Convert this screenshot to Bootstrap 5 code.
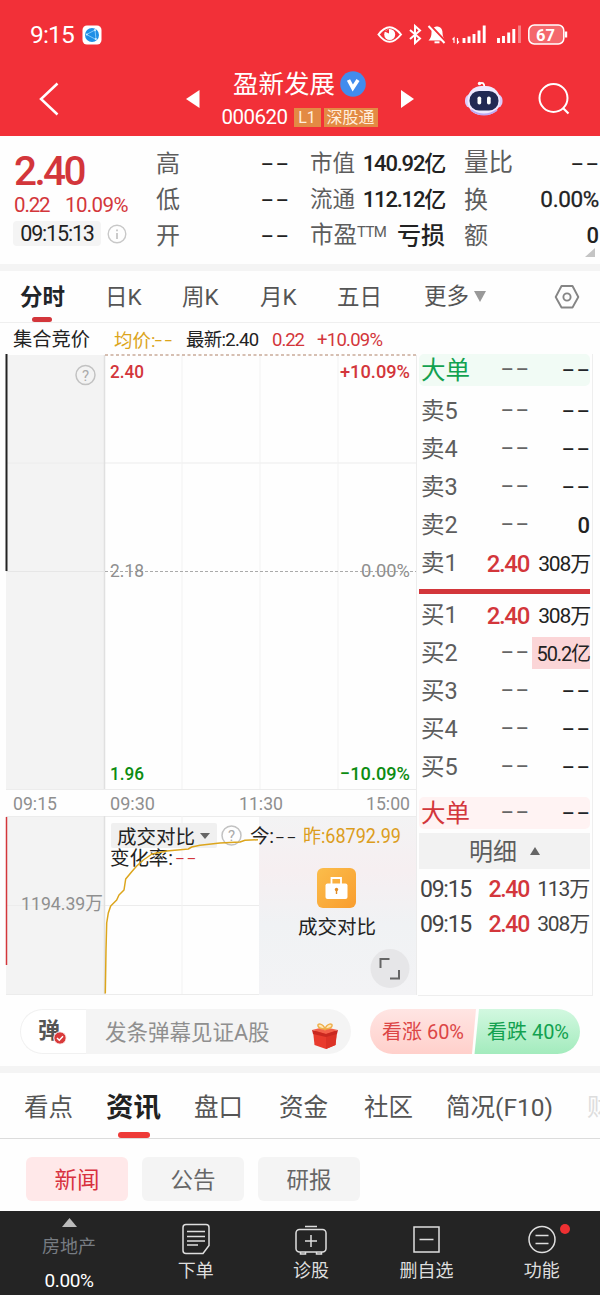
<!DOCTYPE html>
<html lang="zh-CN">
<head>
<meta charset="utf-8">
<meta name="viewport" content="width=device-width, initial-scale=1">
<title>盈新发展 000620</title>
<link href="https://cdn.jsdelivr.net/npm/bootstrap@5.3.0/dist/css/bootstrap.min.css" rel="stylesheet">
<style>
body{width:600px;height:1295px;overflow:hidden;background:#fefefe;color:#222;font-family:Roboto,"Noto Sans CJK SC",sans-serif;line-height:1}
svg{display:block;flex-shrink:0}
svg text{font-family:Roboto,"Noto Sans CJK SC",sans-serif}
.red{color:#d3363b}.grn{color:#12a150}.gry{color:#5d5d5d}
.n{letter-spacing:-.055em}
.n2{letter-spacing:-.03em}
.dash{display:inline-block;font-family:"Noto Sans CJK SC",sans-serif;font-size:24px;font-weight:400;letter-spacing:1px;line-height:24px;transform:translate(2px,-3px) scaleX(1.62);transform-origin:right center}
.topbar{background:#f23038;color:#fff;height:136px}
.status{height:68px;padding:2px 32px 0 30px}
.clock{font-size:24.5px;width:50px;letter-spacing:-.035em}
.titlebar{height:68px;padding:0 28px 6px 38px}
.stockname{font-size:25.5px;height:34px;padding-top:3px}
.tagx{background:#e38a44;color:#ffeedd;font-size:16px;height:19px;line-height:19px}
.quote{height:128px;padding:9px 0 0 14px}
.bigp{font-size:40.5px;font-weight:500;height:50px;line-height:52px;letter-spacing:-.065em}
.timebox{background:#f4f4f4;border-radius:4px;width:88px;height:25px;line-height:25px;font-size:21.5px;margin-left:-1px;text-align:center}
.qcol>div{height:36px;padding-top:1px;display:flex;align-items:center;justify-content:space-between}
.qcol .gry{font-size:24px}.qcol .val{font-size:22px;font-weight:500}
.band{height:7px;background:#f4f4f4}
.ktabs{height:52px;border-bottom:1px solid #efefef;font-size:22.5px;color:#555}
.ktabs>div{height:51px;line-height:53px;white-space:nowrap}
.inforow{height:30px;font-size:18.5px;padding:4px 0 0 13px;white-space:nowrap}
.inforow>span{height:20px;line-height:20px}
.book{width:175px;border-right:1px solid #eee;border-bottom:1px solid #eee;height:642px;margin-top:1px;padding:0 2px 0 1px}
.brow{height:38px;display:flex;align-items:center;padding-left:2px;font-size:23.5px;white-space:nowrap}
.brow .lb{width:51px;color:#5d5d5d;padding-top:2px}
.brow .pr{width:57px;text-align:right;font-weight:500;font-size:24px;padding-top:2px}
.brow .vo{flex:1;text-align:right;font-size:21px;height:32px;line-height:34px}
.brow .pr .dash{font-size:24px;color:#666;transform:translate(2px,-4px) scaleX(1.62)}
.brow .vo .dash{line-height:32px}
.bigrow{height:32px;border-radius:5px}
.bigrow .lb{color:inherit;font-size:24.5px}
.detail{height:36px;background:#f2f2f2;font-size:24px;color:#5d5d5d;padding-top:2px}
.trow{height:35px;display:flex;align-items:center;padding:1px 1px 0 1px;font-size:23px;color:#444;white-space:nowrap}
.danmu{height:70px;padding:13px 20px 12px 20px}
.dinput{width:331px;height:45px;border-radius:23px;background:#f4f4f4;overflow:hidden}
.dleft{width:66px;height:45px;background:#fff;border:1px solid #f1f1f1;border-right:0;border-radius:23px 0 0 23px}
.ntabs{height:66px;border-bottom:1px solid #dcdcdc;font-size:24.5px;color:#555;white-space:nowrap}
.ntabs>div{line-height:69px;height:65px}
.chip{width:102px;height:44px;line-height:46px;border-radius:6px;background:#f4f4f4;color:#666;font-size:22.5px;text-align:center}
.bottombar{height:84px;background:#242424;color:#dedede;font-size:18px}
.bottombar>div{width:115.4px}
</style>
</head>
<body>
<header class="topbar">
  <div class="status d-flex align-items-center">
    <div class="clock">9:15</div>
    <svg style="margin-left:2px" width="20" height="20" viewBox="0 0 20 20"><rect x=".5" y=".5" width="19" height="19" rx="4.5" fill="#fff"/><circle cx="10" cy="10" r="7" fill="#1f8fe6"/><path d="M4.5 9.5 13 5l1 9.500z" fill="none" stroke="#9bd6ff" stroke-width=".8"/><circle cx="13" cy="5.200" r="1.100" fill="#c9ebff"/><circle cx="4.800" cy="9.500" r="1" fill="#c9ebff"/><circle cx="13.800" cy="14" r="1.100" fill="#c9ebff"/></svg>
    <svg class="ms-auto" width="192" height="24" viewBox="376 23 192 24" fill="none" stroke="#fff">
      <path d="M378.500 34.500q11-14.500 22.500 0q-11.500 14.500-22.500 0z" stroke-width="2"/><circle cx="389.700" cy="34.500" r="5.500" fill="#fff" stroke="none"/><path d="M384.500 31.500l4.500-2.500v4.500z" fill="#f23038" stroke="none"/>
      <path d="M410 30l10 8.500-5 4.500V26l5 4.500-10 8.500" stroke-width="2"/>
      <path d="M428.500 40.500q3-2.500 3-8c0-8 11-8 11 0q0 5 3 8z" fill="#fff" stroke="none"/><path d="M434.500 42.300h5" stroke-width="2"/><path d="M429.500 24.500l17 18" stroke="#f23038" stroke-width="2.500"/><path d="M428.500 26l16 17" stroke-width="2"/>
      <path d="M454 43v-5l-1.500 1.500M457.500 38v5l1.500-1.500" stroke-width="1.200"/>
      <path d="M464 43v-5M469 43v-6.500M474 43v-9M479 43v-12.500M484.200 43V25.500M498.500 43v-5M503.500 43v-7M508.700 43v-10.500M513.800 43v-14" stroke-width="2.900"/><path d="M519.500 43V25.500" stroke-width="2.900" stroke-opacity=".4"/>
      <rect x="528.800" y="25" width="35" height="19" rx="5.500" fill="#f4686d" stroke-width="1.500"/><path d="M566 31.500v6" stroke-width="2.400"/>
      <text x="536" y="40.500" font-size="16.500" font-weight="700" fill="#fff" stroke="none" textLength="19">67</text>
    </svg>
  </div>
  <div class="titlebar d-flex align-items-center">
    <svg width="22" height="34" viewBox="0 0 22 34"><path d="M19.500 1.500 3 17l16.500 15.500" fill="none" stroke="#fff" stroke-width="2.500"/></svg>
    <svg style="margin-left:126px" width="14" height="18"><path d="M13.500 0v18L0 9z" fill="#fff"/></svg>
    <div class="d-flex flex-column align-items-center" style="width:199px">
      <div class="stockname d-flex align-items-center">盈新发展
        <svg style="margin:-1px 0 0 5px" width="26" height="26"><circle cx="13" cy="13" r="12.800" fill="#418ced"/><path d="M8.500 9l4.300 8 5.200-8" fill="none" stroke="#fff" stroke-width="3.600"/></svg>
      </div>
      <div class="d-flex align-items-center" style="height:32px;padding-top:2px">
        <span style="font-size:20.500px;width:66px;letter-spacing:-.025em">000620</span>
        <span class="tagx text-center" style="width:27px;margin-left:6px">L1</span>
        <span class="tagx text-center" style="width:54px;margin-left:3px">深股通</span>
      </div>
    </div>
    <svg style="margin-left:2px" width="13" height="18"><path d="M0 0v18l13-9z" fill="#fff"/></svg>
    <svg style="margin-left:51px" width="38" height="36" viewBox="0 0 38 36"><path d="M15 2.500q4-2.500 4.500 4" stroke="#fff" fill="none" stroke-width="1.800"/><circle cx="14.500" cy="2.500" r="1.700" fill="#fff"/><rect x="0" y="13" width="37.500" height="14" rx="6" fill="#dccbfa"/><rect x="2.500" y="5" width="32.500" height="29" rx="14" fill="#efeaff"/><path d="M6 29q13 9 26 0" fill="none" stroke="#bda9f4" stroke-width="2"/><rect x="4.500" y="10" width="29" height="19.500" rx="9.500" fill="#222953"/><rect x="12.500" y="15.500" width="3.700" height="8" rx="1.800" fill="#fff"/><rect x="22" y="15.500" width="3.700" height="8" rx="1.800" fill="#fff"/></svg>
    <svg style="margin-left:35px" width="32" height="32" viewBox="0 0 32 32"><circle cx="15.500" cy="15" r="14" fill="none" stroke="#fff" stroke-width="2"/><path d="M25 25l5.500 5.500" stroke="#fff" stroke-width="2.200"/></svg>
  </div>
</header>

<section class="quote d-flex">
  <div style="width:142px">
    <div class="bigp red">2.40</div>
    <div class="red n2 d-flex align-items-center" style="height:20px;padding-top:1px;font-size:20.500px"><span style="width:51px;letter-spacing:-.055em">0.22</span><span>10.09%</span></div>
    <div class="d-flex align-items-center" style="height:36px;padding-top:1px">
      <div class="timebox n">09:15:13</div>
      <svg style="margin-left:6px" width="20" height="20"><circle cx="10" cy="10" r="8.800" fill="none" stroke="#c8c8c8" stroke-width="1.400"/><path d="M10 9v6M10 5.500v1.800" stroke="#bbb" stroke-width="1.500"/></svg>
    </div>
  </div>
  <div class="qcol" style="width:133px">
    <div><span class="gry">高</span><span class="dash">--</span></div>
    <div><span class="gry">低</span><span class="dash">--</span></div>
    <div><span class="gry">开</span><span class="dash">--</span></div>
  </div>
  <div class="qcol" style="width:135px;margin-left:21px">
    <div><span class="gry" style="font-size:22.500px">市值</span><span class="val n">140.92亿</span></div>
    <div><span class="gry" style="font-size:22.500px">流通</span><span class="val n">112.12亿</span></div>
    <div><span class="gry d-flex" style="font-size:23.500px">市盈<span style="font-size:15px;line-height:17px;letter-spacing:-.04em">TTM</span></span><span class="val" style="font-size:24px">亏损</span></div>
  </div>
  <div class="qcol" style="width:135px;margin-left:19px">
    <div><span class="gry" style="font-size:24.500px">量比</span><span class="dash">--</span></div>
    <div><span class="gry">换</span><span class="val" style="font-size:22.500px;letter-spacing:-.015em;font-weight:400;-webkit-text-stroke:.3px">0.00%</span></div>
    <div><span class="gry">额</span><span class="val">0</span></div>
    <svg class="ms-auto" style="margin-right:4px;margin-top:-5px" width="10" height="9"><path d="M10 0v9H0z" fill="#c4c4c4"/></svg>
  </div>
</section>
<div class="band"></div>

<nav class="ktabs d-flex">
  <div class="position-relative fw-bold text-dark" style="margin-left:20px;width:85px">分时<span class="position-absolute" style="left:12px;bottom:0;width:20px;height:5px;border-radius:3px;background:#d3363b"></span></div>
  <div style="width:77px">日K</div>
  <div style="width:78px">周K</div>
  <div style="width:77px">月K</div>
  <div style="width:87px">五日</div>
  <div class="d-flex align-items-center">更多<svg style="margin-left:5px" width="12" height="11"><path d="M0 0h12L6 11z" fill="#999"/></svg></div>
  <svg style="margin:13px 0 0 68px" width="26" height="26" viewBox="0 0 26 26" fill="none" stroke="#858585" stroke-width="1.900"><path d="M7.500 2h11l5.800 11-5.800 10.500h-11L1.700 13z" stroke-linejoin="round"/><circle cx="13" cy="13" r="3.600"/></svg>
</nav>

<div class="inforow d-flex align-items-center">
  <span style="width:101px;font-size:19.300px">集合竞价</span>
  <span style="width:72px;color:#dca51c">均价:<span class="dash" style="font-size:18px;line-height:18px;transform-origin:left;transform:translate(-1px,-1px) scaleX(1.38)">--</span></span>
  <span style="width:86px;letter-spacing:-.04em">最新:2.40</span>
  <span class="n red" style="width:45px">0.22</span>
  <span class="red" style="letter-spacing:-.04em">+10.09%</span>
</div>

<main class="d-flex">
  <svg width="418" height="643" viewBox="0 353 418 643">
    <defs>
      <linearGradient id="haze" x1="0" y1="0" x2="0" y2="1"><stop offset="0" stop-color="#f3f3f4"/><stop offset=".3" stop-color="#f6eff1"/><stop offset=".6" stop-color="#f0f2f4"/><stop offset="1" stop-color="#f3f3f5"/></linearGradient>
      <linearGradient id="gold" x1="0" y1="0" x2="1" y2="1"><stop offset="0" stop-color="#fbbd4b"/><stop offset="1" stop-color="#f99d2e"/></linearGradient>
    </defs>
    <rect x="6" y="355" width="99" height="434" fill="#f3f3f3"/>
    <rect x="6" y="816" width="99" height="178" fill="#f3f3f3"/>
    <path d="M6 463h410M6 789.500h410M6 816.500h410M6 905.500h253M6 994.500h410M416.500 355v640" stroke="#ececec" fill="none"/>
    <path d="M182 355v434M260 355v434M338 355v434M182 816v178" stroke="#f2f2f2" fill="none"/>
    <path d="M104.500 355v434M104.500 816v178" stroke="#e0e0e0" stroke-width="1.500"/>
    <path d="M6 571.500h99" stroke="#e6e6e6"/>
    <path d="M105 355h311" stroke="#c9aa99" stroke-width="1.500" stroke-dasharray="3 2.500"/>
    <path d="M105 571.500h311" stroke="#aaa" stroke-dasharray="3 2"/>
    <path d="M6.500 354v217" stroke="#222" stroke-width="2"/>
    <rect x="259" y="817" width="157" height="178" fill="url(#haze)"/>
    <path d="M6.500 817v148" stroke="#d3363b" stroke-width="1.500"/>
    <g fill="none" stroke="#c2c2c2" stroke-width="1.500"><circle cx="85.500" cy="375" r="9.500"/><circle cx="231.500" cy="835.500" r="9.500"/></g>
    <g font-size="15" fill="#aaa" text-anchor="middle"><text x="85.500" y="380.500">?</text><text x="231.500" y="841">?</text></g>
    <g font-size="19" font-weight="500">
      <text x="110" y="377.500" fill="#d3363b" textLength="34" lengthAdjust="spacingAndGlyphs">2.40</text>
      <text x="340" y="377.500" fill="#d3363b" textLength="70" lengthAdjust="spacingAndGlyphs">+10.09%</text>
      <text x="110" y="779.500" fill="#0c8c12" textLength="34" lengthAdjust="spacingAndGlyphs">1.96</text>
      <text x="340" y="779.500" fill="#0c8c12" textLength="70" lengthAdjust="spacingAndGlyphs">−10.09%</text>
    </g>
    <g font-size="19" fill="#8f8f8f">
      <text x="110" y="576.500" textLength="34" lengthAdjust="spacingAndGlyphs">2.18</text>
      <text x="361" y="576.500" textLength="49" lengthAdjust="spacingAndGlyphs">0.00%</text>
      <text x="13" y="810" textLength="44" lengthAdjust="spacingAndGlyphs">09:15</text>
      <text x="110" y="810" textLength="45" lengthAdjust="spacingAndGlyphs">09:30</text>
      <text x="239" y="810" textLength="44" lengthAdjust="spacingAndGlyphs">11:30</text>
      <text x="366" y="810" textLength="44" lengthAdjust="spacingAndGlyphs">15:00</text>
      <text x="21" y="910" textLength="82" lengthAdjust="spacingAndGlyphs">1194.39万</text>
    </g>
    <rect x="111" y="823" width="106" height="25" rx="2" fill="#f0f0f0"/>
    <path d="M200 833h10l-5 6z" fill="#666"/>
    <g font-size="19.500" fill="#222">
      <text x="117" y="843.500" textLength="78">成交对比</text>
      <text x="110" y="864.500" textLength="63">变化率:</text>
      <text x="250" y="842.500" textLength="24">今:</text>
      <g style="font-family:'Noto Sans CJK SC',sans-serif"><text x="275" y="841.500" textLength="23" font-size="16" lengthAdjust="spacingAndGlyphs" style="font-family:inherit" letter-spacing="1">--</text>
      <text x="175" y="862.500" fill="#d3363b" textLength="23" font-size="16" lengthAdjust="spacingAndGlyphs" style="font-family:inherit" letter-spacing="1">--</text></g>
      <text x="303" y="842.500" fill="#dc9d1c" textLength="98" lengthAdjust="spacingAndGlyphs">昨:68792.99</text>
      <text x="298" y="933.500" textLength="78">成交对比</text>
    </g>
    <path d="M105.300 993.500 106 950l.7-27 1.600-10 2.400-7 6-6 2.300-5 5-5 1.700-11 6-7.300 5-5.700 6.600-6 8.700-6 14.700-3 21.600-2 3.400-2 8.300-1.700 20-2.300 20-1 5-1.700 13-.6" fill="none" stroke="#dca51c" stroke-width="1.500" stroke-linejoin="round"/>
    <rect x="317" y="868" width="39" height="40" rx="6" fill="url(#gold)"/>
    <rect x="325.500" y="883.500" width="22" height="15.500" rx="2" fill="#fff"/><path d="M331.500 884v-6h9.500v6" fill="none" stroke="#fff" stroke-width="1.800"/><circle cx="336.500" cy="889.500" r="1.700" fill="#e28d27"/><path d="M336.500 890v4" stroke="#e28d27" stroke-width="1.400"/>
    <circle cx="390" cy="968.500" r="19.500" fill="#e6e6e8"/><path d="M380.500 968v-9h9M399 970v8.500h-9" fill="none" stroke="#666" stroke-width="2"/>
  </svg>
  <div class="book">
    <div class="brow bigrow grn" style="background:#f1fbf5;margin-bottom:6px"><span class="lb">大单</span><span class="pr"><span class="dash">--</span></span><span class="vo text-dark"><span class="dash">--</span></span></div>
    <div class="brow"><span class="lb">卖5</span><span class="pr"><span class="dash">--</span></span><span class="vo"><span class="dash">--</span></span></div>
    <div class="brow"><span class="lb">卖4</span><span class="pr"><span class="dash">--</span></span><span class="vo"><span class="dash">--</span></span></div>
    <div class="brow"><span class="lb">卖3</span><span class="pr"><span class="dash">--</span></span><span class="vo"><span class="dash">--</span></span></div>
    <div class="brow"><span class="lb">卖2</span><span class="pr"><span class="dash">--</span></span><span class="vo" style="font-size:22px;font-weight:500">0</span></div>
    <div class="brow"><span class="lb">卖1</span><span class="pr red n">2.40</span><span class="vo n">308万</span></div>
    <div style="height:5px;background:#d3363b;margin:7px 0 2px"></div>
    <div class="brow"><span class="lb">买1</span><span class="pr red n">2.40</span><span class="vo n">308万</span></div>
    <div class="brow"><span class="lb">买2</span><span class="pr"><span class="dash">--</span></span><span class="vo n" style="background:#fbd5d7;margin-left:3px;font-size:20px">50.2亿</span></div>
    <div class="brow"><span class="lb">买3</span><span class="pr"><span class="dash">--</span></span><span class="vo"><span class="dash">--</span></span></div>
    <div class="brow"><span class="lb">买4</span><span class="pr"><span class="dash">--</span></span><span class="vo"><span class="dash">--</span></span></div>
    <div class="brow"><span class="lb">买5</span><span class="pr"><span class="dash">--</span></span><span class="vo"><span class="dash">--</span></span></div>
    <div class="brow bigrow red" style="background:#fff3f3;margin-top:11px"><span class="lb">大单</span><span class="pr"><span class="dash">--</span></span><span class="vo text-dark"><span class="dash">--</span></span></div>
    <div class="detail d-flex align-items-center justify-content-center" style="margin-top:4px">明细<svg style="margin:-3px 0 0 13px" width="10" height="8"><path d="M5 0l5 8H0z" fill="#666"/></svg></div>
    <div class="trow" style="margin-top:2px"><span class="n" style="width:60px">09:15</span><span class="n red" style="width:49px;text-align:right;font-weight:500">2.40</span><span class="n flex-fill text-end" style="font-size:21px">113万</span></div>
    <div class="trow"><span class="n" style="width:60px">09:15</span><span class="n red" style="width:49px;text-align:right;font-weight:500">2.40</span><span class="n flex-fill text-end" style="font-size:21px">308万</span></div>
  </div>
</main>

<section class="danmu d-flex justify-content-between">
  <div class="dinput d-flex align-items-center">
    <div class="dleft d-flex align-items-center position-relative"><span class="fw-bold" style="font-size:22px;color:#555;margin:-2px 0 0 17px">弹</span>
      <svg class="position-absolute" style="left:32px;top:21px" width="14" height="14"><circle cx="7" cy="7" r="6.200" fill="#d93a3a" stroke="#fff"/><path d="M4 7l2.300 2.200L10 5.300" fill="none" stroke="#fff" stroke-width="1.500"/></svg></div>
    <span style="font-size:21.500px;color:#8f8f8f;margin-left:19px;width:207px;padding-top:2px">发条弹幕见证A股</span>
    <svg style="margin-top:8px" width="26" height="28" viewBox="0 0 26 28"><path d="M1 9h24l-1.500 14L14 27 2.500 23z" fill="#e93b2d"/><path d="M14 12l11-3-1.500 14L14 27z" fill="#dc3226"/><path d="M0 8l12-3 14 3-12 4z" fill="#f4604a"/><path d="M0 8l14 4v3L1 12zM26 8l-12 4v3l11-3z" fill="#c92820"/><path d="M13 7C11 1 5 1 6 4s4 3 7 3c3 0 6 0 7-3s-5-3-7 3z" fill="#ffe9b8" stroke="#efb04c" stroke-width="1.500"/></svg>
  </div>
  <svg width="210" height="45" viewBox="0 0 210 45">
    <defs><linearGradient id="up" x1="0" y1="0" x2="0" y2="1"><stop offset="0" stop-color="#ffe5e3"/><stop offset="1" stop-color="#ffd0cb"/></linearGradient><linearGradient id="dn" x1="0" y1="0" x2="0" y2="1"><stop offset="0" stop-color="#d2f8e0"/><stop offset="1" stop-color="#a3ebbd"/></linearGradient></defs>
    <path d="M22.500 0H106l-4 45H22.500a22.500 22.500 0 0 1 0-45z" fill="url(#up)"/><path d="M109 0h78.500a22.500 22.500 0 0 1 0 45H104.500z" fill="url(#dn)"/>
    <g font-size="20"><text x="12" y="29.500" fill="#dc4646" textLength="82" lengthAdjust="spacingAndGlyphs">看涨 60%</text><text x="117" y="29.500" fill="#12a150" textLength="82" lengthAdjust="spacingAndGlyphs">看跌 40%</text></g>
  </svg>
</section>
<div class="band"></div>

<nav class="ntabs d-flex">
  <div style="margin-left:24px;width:82px">看点</div>
  <div class="position-relative fw-bold" style="width:88px;font-size:27.500px;color:#222">资讯<span class="position-absolute" style="left:12px;bottom:0;width:32px;height:6px;border-radius:3px;background:#ee3b38"></span></div>
  <div style="width:85px">盘口</div>
  <div style="width:85px">资金</div>
  <div style="width:82px">社区</div>
  <div style="width:141px">简况(F10)</div>
  <div style="color:#ddd;width:13px;overflow:hidden">财</div>
</nav>
<div class="d-flex" style="gap:14px;padding:18px 0 10px 26px">
  <div class="chip" style="background:#ffe8e9;color:#d8323f">新闻</div><div class="chip">公告</div><div class="chip">研报</div>
</div>

<footer class="bottombar d-flex">
  <div class="d-flex flex-column align-items-center" style="width:138px"><svg style="margin-top:7px" width="15" height="9"><path d="M7.500 0L15 9H0z" fill="#bbb"/></svg><span style="color:#777c82;margin-top:11px">房地产</span><span class="text-white" style="margin-top:15px;font-size:19px;letter-spacing:-.02em">0.00%</span></div>
  <div class="d-flex flex-column align-items-center"><svg style="margin-top:12px" width="28" height="32" viewBox="0 0 28 32" fill="none" stroke="#dedede" stroke-width="1.500"><path d="M4 1.500h20q3 0 3 3v18l-6 8H4q-3 0-3-3v-23q0-3 3-3zM5 8.500h18M5 13.500h18M5 18h18M5 22h11"/></svg><span style="margin-top:7px">下单</span></div>
  <div class="d-flex flex-column align-items-center"><svg style="margin-top:14px" width="32" height="30" viewBox="0 0 32 30" fill="none" stroke="#dedede" stroke-width="1.500"><path d="M10 1.500h12M16 10v12M10 16h12M5.500 27v2h5v-2M21.500 27v2h5v-2"/><rect x="1" y="4.500" width="30" height="22.500" rx="3.500"/></svg><span style="margin-top:7px">诊股</span></div>
  <div class="d-flex flex-column align-items-center"><svg style="margin-top:15px" width="27" height="27" fill="none" stroke="#dedede" stroke-width="1.500"><path d="M1 1h25v25H1zM6.500 13.500h14"/></svg><span style="margin-top:9px">删自选</span></div>
  <div class="d-flex flex-column align-items-center position-relative"><svg style="margin-top:14px" width="28" height="29" fill="none" stroke="#dedede" stroke-width="1.500"><circle cx="14" cy="14.500" r="13"/><path d="M7.500 10.500h13M7.500 18.500h13"/></svg><span style="margin-top:8px">功能</span><span class="position-absolute rounded-circle" style="width:10px;height:10px;left:76px;top:13px;background:#ee3032"></span></div>
</footer>
<script src="https://cdn.jsdelivr.net/npm/bootstrap@5.3.0/dist/js/bootstrap.bundle.min.js"></script>
</body>
</html>
